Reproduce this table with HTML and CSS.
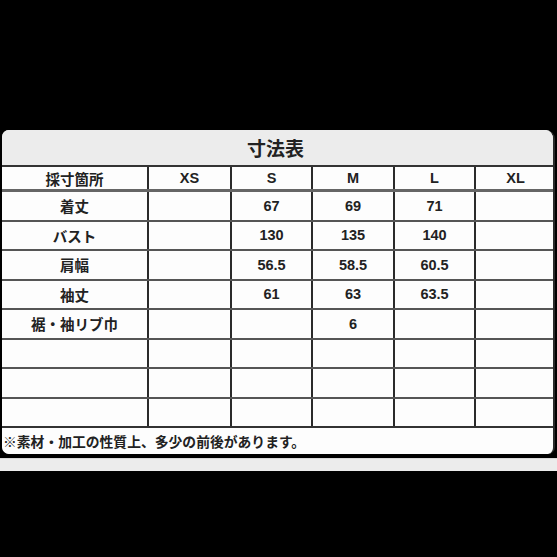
FILE: index.html
```html
<!DOCTYPE html>
<html lang="ja">
<head>
<meta charset="utf-8">
<link rel="stylesheet" href="styles.css">
</head>
<body>
<div class="page">
  <div class="card">
    <div class="title">寸法表</div>
    <table class="sizes">
      <colgroup>
        <col class="c-label"><col class="c-xs"><col class="c-s"><col class="c-m"><col class="c-l"><col class="c-xl">
      </colgroup>
      <tr class="head"><td>採寸箇所</td><td>XS</td><td>S</td><td>M</td><td>L</td><td>XL</td></tr>
      <tr><td>着丈</td><td></td><td>67</td><td>69</td><td>71</td><td></td></tr>
      <tr><td>バスト</td><td></td><td>130</td><td>135</td><td>140</td><td></td></tr>
      <tr><td>肩幅</td><td></td><td>56.5</td><td>58.5</td><td>60.5</td><td></td></tr>
      <tr><td>袖丈</td><td></td><td>61</td><td>63</td><td>63.5</td><td></td></tr>
      <tr><td>裾・袖リブ巾</td><td></td><td></td><td>6</td><td></td><td></td></tr>
      <tr><td></td><td></td><td></td><td></td><td></td><td></td></tr>
      <tr><td></td><td></td><td></td><td></td><td></td><td></td></tr>
      <tr><td></td><td></td><td></td><td></td><td></td><td></td></tr>
    </table>
    <div class="note">※素材・加工の性質上、多少の前後があります。</div>
  </div>
  <div class="strip"></div>
</div>
</body>
</html>
```

FILE: styles.css
```css
html, body {
  margin: 0;
  padding: 0;
  background: #000;
  width: 557px;
  height: 557px;
  overflow: hidden;
}
.page {
  padding-top: 130px;
  font-family: "Liberation Sans", "Noto Sans CJK JP", Arial, sans-serif;
  font-weight: bold;
  color: #222;
}
.card {
  margin-left: 2px;
  width: 551px;
  border-right: 2px solid #2a2a2a;
  background: #fdfdfd;
  border-radius: 7px 9px 7px 7px;
  overflow: hidden;
}
.title {
  height: 35px;
  line-height: 36px;
  background: #ececec;
  text-align: center;
  font-size: 19px;
  font-family: "Noto Sans CJK JP", sans-serif;
  border-bottom: 2px solid #333;
  padding-right: 4px;
}
.sizes {
  width: 553px;
  border-collapse: collapse;
  table-layout: fixed;
  margin-right: -2px;
}
.c-label { width: 146px; }
.c-xs { width: 83px; }
.c-s { width: 81px; }
.c-m { width: 82px; }
.c-l { width: 81px; }
.c-xl { width: 80px; }
.sizes td {
  height: 27.5px;
  padding: 0;
  text-align: center;
  font-size: 14.5px;
  border-left: 2px solid #2a2a2a;
  border-bottom: 2px solid #555;
}
.sizes td:first-child {
  border-left: none;
  font-family: "Noto Sans CJK JP", sans-serif;
  font-size: 14.5px;
}
.sizes tr.head td {
  height: 22px;
  border-bottom: 3px solid #666;
}
.sizes tr:last-child td {
  border-bottom: 2px solid #333;
}
.note {
  height: 26px;
  line-height: 27px;
  padding-left: 1px;
  font-size: 13.8px;
  font-family: "Noto Sans CJK JP", sans-serif;
  background: #fdfdfd;
  border-radius: 0 0 8px 8px;
}
.strip {
  margin-top: 4px;
  height: 12px;
  background: #ececec;
  border-top: 1px solid #d8d8d8;
}
```
